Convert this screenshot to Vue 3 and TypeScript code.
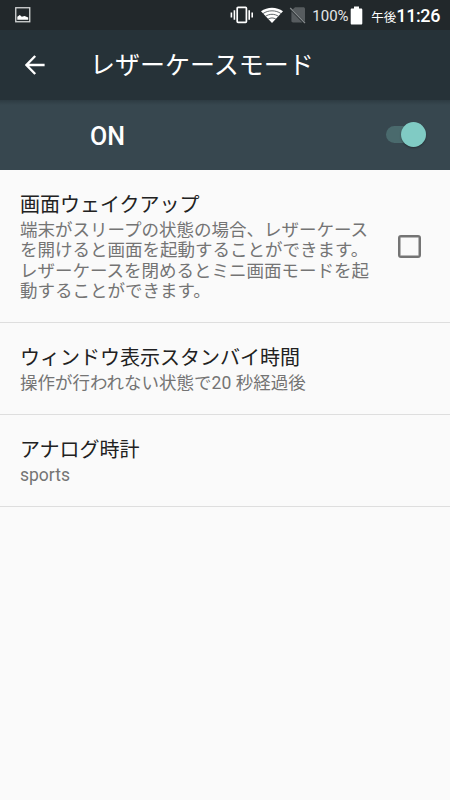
<script setup lang="ts">
import { ref } from 'vue'

interface Preference {
  title: string
  lines: string[]
  checkbox?: boolean
}

const enabled = ref(true)
const wakeUp = ref(false)

const preferences: Preference[] = [
  {
    title: '画面ウェイクアップ',
    lines: [
      '端末がスリープの状態の場合、レザーケース',
      'を開けると画面を起動することができます。',
      'レザーケースを閉めるとミニ画面モードを起',
      '動することができます。',
    ],
    checkbox: true,
  },
  { title: 'ウィンドウ表示スタンバイ時間', lines: ['操作が行われない状態で20 秒経過後'] },
  { title: 'アナログ時計', lines: ['sports'] },
]
</script>

<template>
  <div class="screen">
    <header class="status">
      <svg class="picture" width="16" height="16" viewBox="0 0 16 16">
        <rect x="0.75" y="0.75" width="14" height="14" fill="none" stroke="#d5d7d8" stroke-width="1.3" />
        <path d="M2.3 12.8V9.7L4.8 8l2 1.7L9.6 9l3.6 1.6v2.2z" fill="#fff" />
      </svg>
      <div class="indicators">
        <svg class="vibrate" width="24" height="18" viewBox="0 0 24 18">
          <rect x="7.2" y="1.4" width="9.2" height="15" rx="0.8" fill="none" stroke="#fff" stroke-width="1.7" />
          <path d="M4.4 4.2v9.6M1.4 6.5v5M19.2 4.2v9.6M22.2 6.5v5" stroke="#fff" stroke-width="1.6" />
        </svg>
        <svg class="wifi" width="24" height="18" viewBox="0 0 24 18">
          <path d="M1 5.3C7.2.4 16.8.4 23 5.3L12 17z" fill="#fff" />
          <path d="M3 7.6c5.1-3.7 12.9-3.7 18 0M5.4 10.4c3.9-2.8 9.3-2.8 13.2 0M8 13.2c2.4-1.7 5.6-1.7 8 0" fill="none" stroke="#50575a" stroke-width="0.9" />
        </svg>
        <svg class="sim" width="18" height="18" viewBox="0 0 18 18">
          <path d="M6 1.2h8.3c1 0 1.7.7 1.7 1.7v12.5L3.6 3.6zM2.4 5.2 13.4 16.5H4.1c-1 0-1.7-.7-1.7-1.7z" fill="#575c5f" />
          <path d="M1.2 2 16 17" stroke="#858a8c" stroke-width="1.2" />
        </svg>
        <span class="percent">100%</span>
        <svg class="battery" width="13" height="20" viewBox="0 0 13 20">
          <path d="M4 0.5h5v2h2.1c.8 0 1.2.4 1.2 1.2v13.6c0 .8-.4 1.2-1.2 1.2H1.9c-.8 0-1.2-.4-1.2-1.2V3.7c0-.8.4-1.2 1.2-1.2H4z" fill="#fff" />
        </svg>
        <span class="meridiem">午後</span>
        <span class="clock">11:26</span>
      </div>
    </header>

    <nav class="toolbar">
      <svg class="back" width="20" height="20" viewBox="0 0 20 20">
        <path d="M19.6 10H1.8M10.2 1 1.4 10l8.8 9" fill="none" stroke="#fff" stroke-width="2.4" />
      </svg>
      <h1>レザーケースモード</h1>
    </nav>

    <section class="master" @click="enabled = !enabled">
      <span>{{ enabled ? 'ON' : 'OFF' }}</span>
      <div class="switch" :class="{ off: !enabled }"><div class="thumb"></div></div>
    </section>

    <main>
      <section v-for="item in preferences" :key="item.title" class="row">
        <div class="copy">
          <h2>{{ item.title }}</h2>
          <p><span v-for="line in item.lines" :key="line">{{ line }}</span></p>
        </div>
        <div v-if="item.checkbox" class="box" :class="{ checked: wakeUp }" @click="wakeUp = !wakeUp"></div>
      </section>
    </main>
  </div>
</template>

<style>
body {
  background: #fafafa;
}
</style>

<style scoped>
.screen {
  height: 800px;
  overflow: hidden;
  background: #fafafa;
  font-family: Roboto, 'Noto Sans CJK JP', sans-serif;
}
.status {
  display: flex;
  justify-content: space-between;
  height: 30px;
  box-sizing: border-box;
  padding: 0 10px 0 15px;
  background: #22282b;
  color: #fff;
}
.picture {
  margin-top: 7px;
}
.indicators {
  display: flex;
  align-items: center;
  height: 30px;
  white-space: nowrap;
}
.wifi {
  margin-left: 6px;
}
.sim {
  margin-left: 5px;
}
.percent {
  margin-left: 5px;
  width: 37px;
  font-size: 15px;
  line-height: 30px;
  padding-top: 1px;
  color: #e4e6e7;
}
.battery {
  margin: 1px 0 0 1px;
}
.meridiem {
  margin-left: 8px;
  padding-top: 5px;
  font-size: 12.5px;
  line-height: 27px;
}
.clock {
  padding-top: 1px;
  font-size: 18px;
  font-weight: 500;
  line-height: 30px;
  letter-spacing: -0.4px;
}
.toolbar {
  display: flex;
  align-items: center;
  height: 70px;
  padding-left: 25px;
  background: #263238;
}
h1 {
  margin: 2px 0 0 45px;
  font-size: 25px;
  font-weight: 400;
  line-height: 36px;
  color: #fff;
}
.master {
  display: flex;
  align-items: center;
  justify-content: space-between;
  height: 70px;
  box-sizing: border-box;
  padding: 2px 24px 0 90px;
  background: linear-gradient(#2d3b42, #37474f 5px);
  color: #fff;
  font-size: 25px;
  font-weight: 500;
}
.switch {
  display: flex;
  align-items: center;
  justify-content: flex-end;
  width: 40px;
  height: 17px;
  margin-bottom: 3px;
  border-radius: 9px;
  background: #4a6a6d;
}
.switch.off {
  justify-content: flex-start;
  background: #66747a;
}
.thumb {
  width: 25px;
  height: 25px;
  flex: none;
  border-radius: 50%;
  background: #80cbc4;
  box-shadow: 0 1px 2px rgba(0, 0, 0, 0.35);
}
.row {
  display: flex;
  align-items: center;
  justify-content: space-between;
  height: 92px;
  box-sizing: border-box;
  padding: 2px 28px 0 20px;
  border-bottom: 1px solid #dedede;
}
.row:first-child {
  height: 153px;
  padding-top: 1px;
}
h2 {
  margin: 0;
  font-size: 20px;
  font-weight: 400;
  line-height: 27px;
  color: #212121;
}
p {
  margin: 1px 0 0;
  font-size: 17.5px;
  line-height: 20.5px;
  color: #747474;
}
p span {
  display: block;
  white-space: nowrap;
}
.box {
  width: 23px;
  height: 23px;
  box-sizing: border-box;
  margin: 0 1px 0 0;
  border: 2px solid #747474;
  border-radius: 3px;
  box-shadow: inset 0 0 0 0.5px #747474;
}
.box.checked {
  background: #009688;
}
</style>
